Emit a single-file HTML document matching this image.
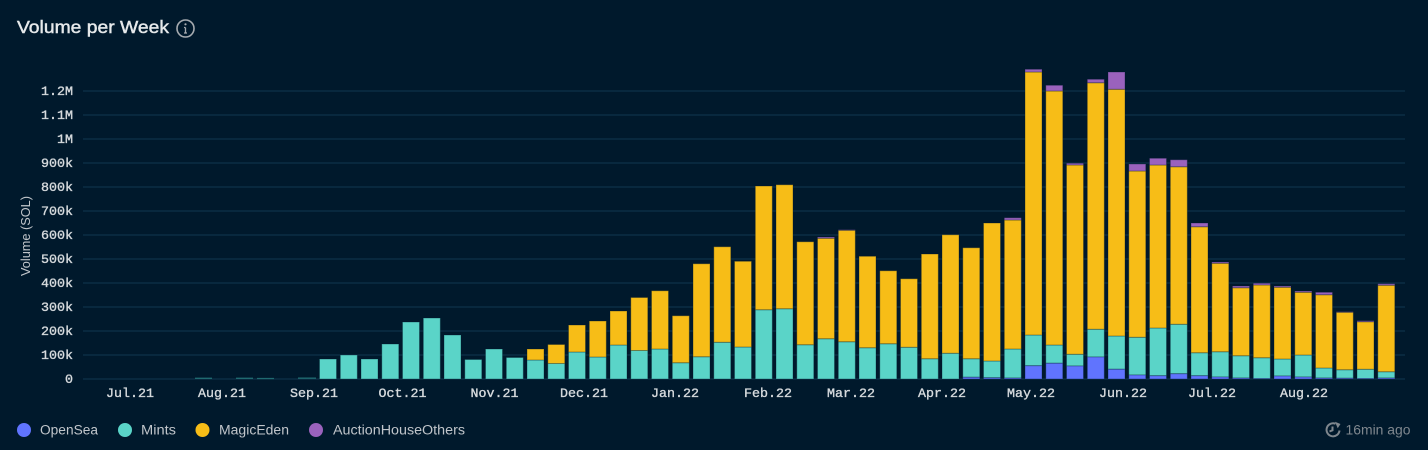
<!DOCTYPE html>
<html><head><meta charset="utf-8"><style>
html,body{margin:0;padding:0;background:#00192c;width:1428px;height:450px;overflow:hidden}
svg{display:block;position:absolute;left:0;top:0}
.y{font:13.33px "Liberation Mono",monospace;fill:#d6dadd;stroke:#d6dadd;stroke-width:.35px;text-anchor:end}
.x{font:13.33px "Liberation Mono",monospace;fill:#d6dadd;stroke:#d6dadd;stroke-width:.35px;text-anchor:middle}
.l{font:13.5px "Liberation Sans",sans-serif;fill:#c0c5ca}
</style></head><body>
<svg width="1428" height="450" viewBox="0 0 1428 450" xmlns="http://www.w3.org/2000/svg">
<rect width="1428" height="450" fill="#00192c"/>
<text x="17" y="33" font-family="Liberation Sans,sans-serif" font-size="17.5" fill="#e6e9eb" stroke="#e6e9eb" stroke-width=".45" textLength="152" lengthAdjust="spacingAndGlyphs">Volume per Week</text>
<circle cx="185.500" cy="28.500" r="8.500" fill="none" stroke="#a6abb0" stroke-width="1.600"/>
<circle cx="185.500" cy="24.300" r="1.100" fill="#a6abb0"/>
<path d="M185.500 27.500v5.500M184 27.500h1.500M184 33h3" stroke="#a6abb0" stroke-width="1.300" fill="none"/>
<g stroke="#0e3349" stroke-width="1.200">
<path d="M83 91H1405M83 115H1405M83 139H1405M83 163H1405M83 187H1405M83 211H1405M83 235H1405M83 259H1405M83 283H1405M83 307H1405M83 331H1405M83 355H1405M83 379H1405"/>
</g>
<g class="y-labels">
<text class="y" x="73" y="95">1.2M</text>
<text class="y" x="73" y="119">1.1M</text>
<text class="y" x="73" y="143">1M</text>
<text class="y" x="73" y="167">900k</text>
<text class="y" x="73" y="191">800k</text>
<text class="y" x="73" y="215">700k</text>
<text class="y" x="73" y="239">600k</text>
<text class="y" x="73" y="263">500k</text>
<text class="y" x="73" y="287">400k</text>
<text class="y" x="73" y="311">300k</text>
<text class="y" x="73" y="335">200k</text>
<text class="y" x="73" y="359">100k</text>
<text class="y" x="73" y="383">0</text>
</g>
<text transform="translate(30 236) rotate(-90)" text-anchor="middle" font-family="Liberation Sans,sans-serif" font-size="13" fill="#c0c5ca" textLength="80" lengthAdjust="spacingAndGlyphs">Volume (SOL)</text>
<path d="M195 378.300h17M236 378.300h17M257 378.500h17M298 378.200h18" stroke="#1f6a70" stroke-width="1.300"/>
<g stroke="#00192c" stroke-opacity=".32" stroke-width="1">
<path fill="#5ad4c8" d="M319.500 359h17V379h-17zM340.300 355h17V379h-17zM361 359h17V379h-17zM381.800 344h17V379h-17zM402.500 322h17V379h-17zM423.300 318h17V379h-17zM444 335h17V379h-17zM464.800 359.500h17V379h-17zM485.500 349h17V379h-17zM506.300 357.500h17V379h-17zM527 360h17V379h-17zM547.800 363.500h17V379h-17zM568.500 352h17V379h-17zM589.300 357h17V379h-17zM610 345h17V379h-17zM630.800 350.500h17V379h-17zM651.500 349h17V379h-17zM672.300 362.700h17V379h-17zM693 356.700h17V379h-17zM713.800 342.300h17V379h-17zM734.500 347h17V379h-17zM755.300 309.700h17V379h-17zM776 308.700h17V379h-17zM796.800 344.700h17V379h-17zM817.500 338.700h17V379h-17zM838.300 341.700h17V379h-17zM859 347.700h17V379h-17zM879.800 343.700h17V379h-17zM900.500 347.300h17V379h-17zM921.300 358.700h17V379h-17zM942 353.300h17V379h-17zM962.800 358.700h17V377.300h-17zM983.500 361h17V377.700h-17zM1004.300 349h17V378h-17zM1025 335h17V365.700h-17zM1045.800 345h17V363.300h-17zM1066.500 354.300h17V366h-17zM1087.300 329.300h17V357h-17zM1108 336h17V369.300h-17zM1128.800 337.300h17V375h-17zM1149.500 328h17V375.700h-17zM1170.300 324.300h17V373.700h-17zM1191 352.700h17V375.700h-17zM1211.800 351.700h17V377h-17zM1232.500 355.700h17V378h-17zM1253.300 357.700h17V378.500h-17zM1274 359h17V376h-17zM1294.800 355h17V377h-17zM1315.500 368h17V378h-17zM1336.300 369.700h17V378.300h-17zM1357 369.300h17V378.500h-17zM1377.800 371.700h17V378h-17z"/>
<path fill="#f7bd17" d="M527 349h17V360h-17zM547.800 344.500h17V363.500h-17zM568.500 325h17V352h-17zM589.300 321h17V357h-17zM610 311h17V345h-17zM630.800 297.500h17V350.500h-17zM651.500 290.700h17V349h-17zM672.300 315.700h17V362.700h-17zM693 263.700h17V356.700h-17zM713.800 246.700h17V342.300h-17zM734.500 261.300h17V347h-17zM755.300 186h17V309.700h-17zM776 184.700h17V308.700h-17zM796.800 241.700h17V344.700h-17zM817.500 238.300h17V338.700h-17zM838.300 230.300h17V341.700h-17zM859 256.300h17V347.700h-17zM879.800 270.700h17V343.700h-17zM900.500 278.700h17V347.300h-17zM921.300 254h17V358.700h-17zM942 234.700h17V353.300h-17zM962.800 247.700h17V358.700h-17zM983.500 223h17V361h-17zM1004.300 220h17V349h-17zM1025 72h17V335h-17zM1045.800 91h17V345h-17zM1066.500 165h17V354.300h-17zM1087.300 82.700h17V329.300h-17zM1108 89.300h17V336h-17zM1128.800 171h17V337.300h-17zM1149.500 165h17V328h-17zM1170.300 166.700h17V324.300h-17zM1191 226.700h17V352.700h-17zM1211.800 263.300h17V351.700h-17zM1232.500 287.700h17V355.700h-17zM1253.300 285h17V357.700h-17zM1274 287.300h17V359h-17zM1294.800 292.300h17V355h-17zM1315.500 294.700h17V368h-17zM1336.300 312.300h17V369.700h-17zM1357 321.700h17V369.300h-17zM1377.800 285.300h17V371.700h-17z"/>
<path fill="#9a62bd" d="M817.500 237h17V238.300h-17zM838.300 229.700h17V230.300h-17zM1004.300 217.700h17V220h-17zM1025 69.300h17V72h-17zM1045.800 85.300h17V91h-17zM1066.500 163.300h17V165h-17zM1087.300 79.300h17V82.700h-17zM1108 72h17V89.300h-17zM1128.800 164h17V171h-17zM1149.500 158.300h17V165h-17zM1170.300 159.700h17V166.700h-17zM1191 223h17V226.700h-17zM1211.800 262h17V263.300h-17zM1232.500 286h17V287.700h-17zM1253.300 283.300h17V285h-17zM1274 286h17V287.300h-17zM1294.800 291h17V292.300h-17zM1315.500 292.300h17V294.700h-17zM1336.300 311.700h17V312.300h-17zM1357 320.700h17V321.700h-17zM1377.800 283.700h17V285.300h-17z"/>
<path fill="#6074fe" d="M962.800 377.300h17V379h-17zM983.500 377.700h17V379h-17zM1004.300 378h17V379h-17zM1025 365.700h17V379h-17zM1045.800 363.300h17V379h-17zM1066.500 366h17V379h-17zM1087.300 357h17V379h-17zM1108 369.300h17V379h-17zM1128.800 375h17V379h-17zM1149.500 375.700h17V379h-17zM1170.300 373.700h17V379h-17zM1191 375.700h17V379h-17zM1211.800 377h17V379h-17zM1232.500 378h17V379h-17zM1253.300 378.500h17V379h-17zM1274 376h17V379h-17zM1294.800 377h17V379h-17zM1315.500 378h17V379h-17zM1336.300 378.300h17V379h-17zM1357 378.500h17V379h-17zM1377.800 378h17V379h-17z"/>
</g>
<g>
<text class="x" x="130" y="397">Jul.21</text>
<text class="x" x="222" y="397">Aug.21</text>
<text class="x" x="314" y="397">Sep.21</text>
<text class="x" x="402.500" y="397">Oct.21</text>
<text class="x" x="494.500" y="397">Nov.21</text>
<text class="x" x="584" y="397">Dec.21</text>
<text class="x" x="675" y="397">Jan.22</text>
<text class="x" x="768" y="397">Feb.22</text>
<text class="x" x="851" y="397">Mar.22</text>
<text class="x" x="942" y="397">Apr.22</text>
<text class="x" x="1031" y="397">May.22</text>
<text class="x" x="1123" y="397">Jun.22</text>
<text class="x" x="1212" y="397">Jul.22</text>
<text class="x" x="1304" y="397">Aug.22</text>
</g>
<circle cx="24" cy="430" r="7" fill="#6074fe"/>
<circle cx="125" cy="430" r="7" fill="#5ad4c8"/>
<circle cx="202.500" cy="430" r="7" fill="#f7bd17"/>
<circle cx="316" cy="430" r="7" fill="#9a62bd"/>
<text class="l" x="40" y="434.500" textLength="58" lengthAdjust="spacingAndGlyphs">OpenSea</text>
<text class="l" x="141" y="434.500" textLength="35" lengthAdjust="spacingAndGlyphs">Mints</text>
<text class="l" x="219" y="434.500" textLength="70" lengthAdjust="spacingAndGlyphs">MagicEden</text>
<text class="l" x="333" y="434.500" textLength="132" lengthAdjust="spacingAndGlyphs">AuctionHouseOthers</text>
<path d="M1335.500 423.800a6.500 6.500 0 1 0 4 6.700M1332.500 426.500v3.800l-3 1.200" fill="none" stroke="#7f878e" stroke-width="2"/>
<path d="M1335 421.800l5.500 2.200-2.800 4.300z" fill="#7f878e"/>
<text x="1345.500" y="434.500" font-family="Liberation Sans,sans-serif" font-size="13.500" fill="#7f878e" textLength="65" lengthAdjust="spacingAndGlyphs">16min ago</text>
</svg>
</body></html>
